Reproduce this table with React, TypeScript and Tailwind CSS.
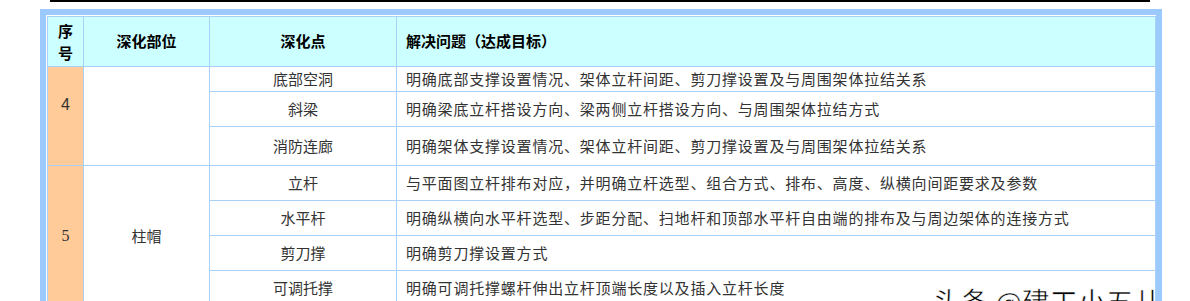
import React from "react";

const cjk = { fontFamily: '"Noto Sans CJK SC", "Noto Sans", sans-serif' };

const cell = "border border-[#a9d0f7] align-middle p-0";
const desc = `${cell} pl-[9px] tracking-[0.8px]`;

export default function App() {
  return (
    <div className="relative w-[1190px] h-[301px] overflow-hidden bg-white" style={cjk}>
      <div className="ml-[50px] w-[1100px] h-[2px] bg-black" />
      <div className="ml-[40px] mt-[7px] w-[1122px] border-[6px] border-[#9ccafc] bg-white p-[1px]">
        <table className="w-[1108px] table-fixed border-collapse text-[15px] text-[#333]">
          <colgroup>
            <col className="w-[36px]" />
            <col className="w-[126px]" />
            <col className="w-[187px]" />
            <col className="w-[759px]" />
          </colgroup>
          <thead>
            <tr className="h-[50px] bg-[#ccffff] text-black font-bold">
              <th className={`${cell} leading-[22px]`}>序<br />号</th>
              <th className={cell}>深化部位</th>
              <th className={cell}>深化点</th>
              <th className={`${cell} text-left pl-[9px]`}>解决问题（达成目标）</th>
            </tr>
          </thead>
          <tbody>
            <tr className="h-[25px]">
              <td rowSpan={3} className={`${cell} bg-[#ffcc99] text-center pb-[22px] text-[16px]`} style={{ fontFamily: '"Liberation Sans", sans-serif' }}>4</td>
              <td rowSpan={3} className={cell}></td>
              <td className={`${cell} text-center`}>底部空洞</td>
              <td className={desc}>明确底部支撑设置情况、架体立杆间距、剪刀撑设置及与周围架体拉结关系</td>
            </tr>
            <tr className="h-[35px]">
              <td className={`${cell} text-center`}>斜梁</td>
              <td className={desc}>明确梁底立杆搭设方向、梁两侧立杆搭设方向、与周围架体拉结方式</td>
            </tr>
            <tr className="h-[39px]">
              <td className={`${cell} text-center`}>消防连廊</td>
              <td className={desc}>明确架体支撑设置情况、架体立杆间距、剪刀撑设置及与周围架体拉结关系</td>
            </tr>
            <tr className="h-[35px]">
              <td rowSpan={4} className={`${cell} bg-[#ffcc99] text-center text-[16px]`} style={{ fontFamily: '"Liberation Serif", serif' }}>5</td>
              <td rowSpan={4} className={`${cell} text-center`}>柱帽</td>
              <td className={`${cell} text-center`}>立杆</td>
              <td className={desc}>与平面图立杆排布对应，并明确立杆选型、组合方式、排布、高度、纵横向间距要求及参数</td>
            </tr>
            <tr className="h-[35px]">
              <td className={`${cell} text-center`}>水平杆</td>
              <td className={desc}>明确纵横向水平杆选型、步距分配、扫地杆和顶部水平杆自由端的排布及与周边架体的连接方式</td>
            </tr>
            <tr className="h-[35px]">
              <td className={`${cell} text-center`}>剪刀撑</td>
              <td className={desc}>明确剪刀撑设置方式</td>
            </tr>
            <tr className="h-[36px]">
              <td className={`${cell} text-center`}>可调托撑</td>
              <td className={desc}>明确可调托撑螺杆伸出立杆顶端长度以及插入立杆长度</td>
            </tr>
          </tbody>
        </table>
      </div>
      <div
        className="absolute left-[933px] top-[287px] text-[28px] leading-none text-black whitespace-nowrap"
        style={{ WebkitTextStroke: "0.5px white" }}
      >
        头条 @建工小五儿
      </div>
    </div>
  );
}
